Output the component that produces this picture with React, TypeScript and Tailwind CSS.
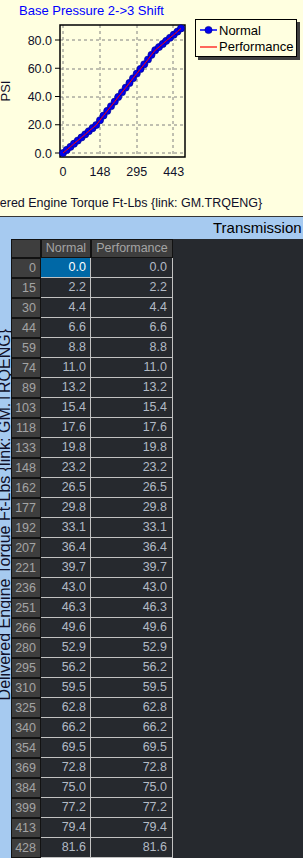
import React from "react";

// ---------------------------------------------------------------------------
// Data
// ---------------------------------------------------------------------------

const ROWS: [number, number][] = [
  [0, 0.0], [15, 2.2], [30, 4.4], [44, 6.6], [59, 8.8], [74, 11.0],
  [89, 13.2], [103, 15.4], [118, 17.6], [133, 19.8], [148, 23.2], [162, 26.5],
  [177, 29.8], [192, 33.1], [207, 36.4], [221, 39.7], [236, 43.0], [251, 46.3],
  [266, 49.6], [280, 52.9], [295, 56.2], [310, 59.5], [325, 62.8], [340, 66.2],
  [354, 69.5], [369, 72.8], [384, 75.0], [399, 77.2], [413, 79.4], [428, 81.6],
];

// rows below the visible part of the table still show up on the chart
const CURVE: [number, number][] = [...ROWS, [443, 83.8], [458, 86.0], [472, 88.2]];

const px = (v: number) => 63 + v * 0.25;
const py = (v: number) => 153 - v * 1.4125;

// ---------------------------------------------------------------------------
// Chart
// ---------------------------------------------------------------------------

function Chart() {
  const pts = CURVE.map(([x, y]) => `${px(x)},${py(y)}`).join(" ");

  return (
    <div className="h-[216px] bg-[#ffffe0]">
      <svg width={303} height={216} className="block">
        <text x={19} y={15} fontSize={13} fill="#0000ff">
          Base Pressure 2-&gt;3 Shift
        </text>

        {/* grid */}
        {[40, 69, 97, 125, 153].map((y) => (
          <line key={y} x1={60} x2={185} y1={y} y2={y} stroke="#808080" strokeDasharray="3 3" />
        ))}
        {[63, 100, 137, 173].map((x) => (
          <line key={x} x1={x} x2={x} y1={25} y2={157} stroke="#808080" strokeDasharray="3 3" />
        ))}
        <rect x={60} y={25} width={125} height={132} fill="none" stroke="#000" strokeWidth={1.5} />

        {/* y axis */}
        {[80, 60, 40, 20, 0].map((v) => (
          <g key={v}>
            <line x1={55} x2={60} y1={py(v)} y2={py(v)} stroke="#000" />
            <text x={52} y={py(v) + 4.5} fontSize={12.5} textAnchor="end" fill="#10102a">
              {v.toFixed(1)}
            </text>
          </g>
        ))}
        <text transform="translate(10,91) rotate(-90)" fontSize={13} textAnchor="middle" fill="#10102a">
          PSI
        </text>

        {/* x axis */}
        {[0, 148, 295, 443].map((v) => (
          <text key={v} x={px(v)} y={176} fontSize={12.5} textAnchor="middle" fill="#10102a">
            {v}
          </text>
        ))}
        <text x={-28} y={207} fontSize={12.5} fill="#10102a">
          Delivered Engine Torque Ft-Lbs {"{link: GM.TRQENG}"}
        </text>

        {/* series */}
        <polyline points={pts} fill="none" stroke="#0000ff" strokeWidth={2} />
        {CURVE.map(([x, y]) => (
          <circle key={x} cx={px(x)} cy={py(y)} r={3.6} fill="#0000ee" stroke="#000080" strokeWidth={0.6} />
        ))}
        <polyline points={pts} fill="none" stroke="#ff0000" strokeWidth={1} />

        {/* legend */}
        <rect x={198} y={22} width={102} height={38} fill="#404040" />
        <rect x={195.5} y={19.5} width={101} height={37} fill="#ffffe0" stroke="#000" />
        <line x1={200} x2={217} y1={30} y2={30} stroke="#0000ff" strokeWidth={1.5} />
        <circle cx={208.5} cy={30} r={3.6} fill="#0000ee" stroke="#000080" strokeWidth={0.6} />
        <text x={219} y={35} fontSize={13} fill="#000">Normal</text>
        <line x1={200} x2={217} y1={47} y2={47} stroke="#ff0000" strokeWidth={1.2} />
        <text x={219} y={51} fontSize={13} fill="#000">Performance</text>
      </svg>
    </div>
  );
}

// ---------------------------------------------------------------------------
// Table
// ---------------------------------------------------------------------------

const headCell =
  "flex items-center border border-[#121212] bg-[#3e3e3e] text-[#a4a4a4]";

function Table() {
  return (
    <div className="flex flex-1 flex-col bg-[#a6caf0]">
      <div className="h-[22px] pl-[213px] text-[15px] leading-[22px] text-black whitespace-nowrap">
        Transmission
      </div>

      <div className="flex flex-1">
        {/* vertical axis name, clipped by the narrow strip */}
        <div className="relative w-[11px] overflow-hidden">
          <span className="absolute left-[-4px] top-[90px] whitespace-nowrap text-[16px] leading-[18px] text-[#10102a] [writing-mode:vertical-rl] rotate-180">
            Delivered Engine Torque Ft-Lbs {"{link: GM.TRQENG}"}
          </span>
        </div>

        <div className="flex-1 bg-[#26292e] text-[12.5px]">
          <div className="grid grid-cols-[30px_50px_82px]">
            <div className={`${headCell} h-[19px]`} />
            <div className={`${headCell} h-[19px] justify-center`}>Normal</div>
            <div className={`${headCell} h-[19px] justify-center`}>Performance</div>

            {ROWS.map(([x, y], i) => {
              const val = y.toFixed(1);
              return (
                <React.Fragment key={x}>
                  <div className={`${headCell} h-[20px] justify-end pr-[4px]`}>{x}</div>
                  <div
                    className={[
                      "flex h-[20px] items-center justify-end pr-[4px] border-r border-b border-[#c2c2c2]",
                      i === 0 ? "bg-[#0068a6] text-white" : "text-[#b2bac5]",
                    ].join(" ")}
                  >
                    {val}
                  </div>
                  <div className="flex h-[20px] items-center justify-end pr-[5px] border-r border-b border-[#c2c2c2] text-[#b2bac5]">
                    {val}
                  </div>
                </React.Fragment>
              );
            })}
          </div>
        </div>
      </div>
    </div>
  );
}

// ---------------------------------------------------------------------------
// App
// ---------------------------------------------------------------------------

export default function App() {
  return (
    <div className="flex h-[858px] w-[303px] flex-col overflow-hidden font-['Liberation_Sans',Arial,sans-serif]">
      <Chart />
      <div className="h-[2px] bg-[#363636]" />
      <Table />
    </div>
  );
}
